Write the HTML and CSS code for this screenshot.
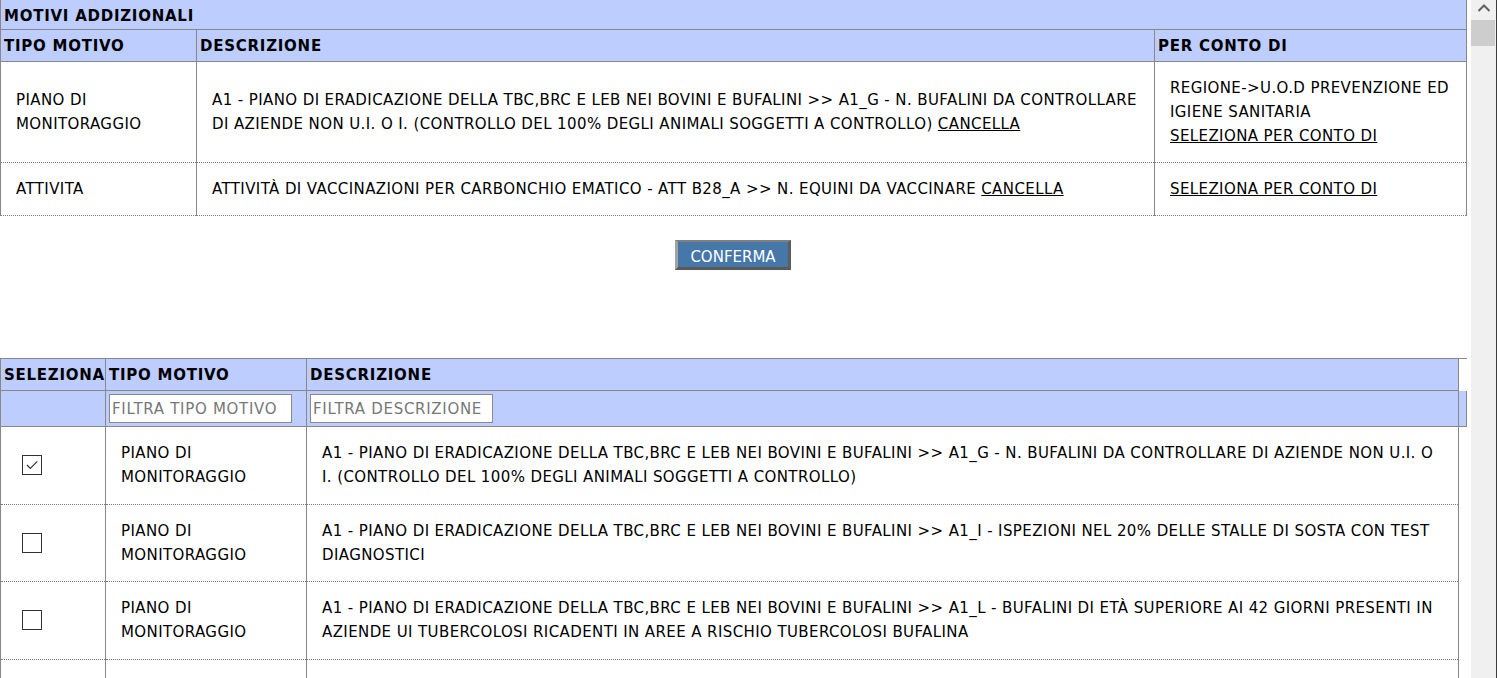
FILE: index.html
```html
<!DOCTYPE html>
<html lang="it">
<head>
<meta charset="utf-8">
<title>Motivi addizionali</title>
<link rel="stylesheet" href="styles.css">
</head>
<body>
<div class="page">
  <table class="grid t1">
    <colgroup><col class="c1a"><col class="c1b"><col class="c1c"></colgroup>
    <thead>
      <tr><th colspan="3" class="caption">MOTIVI ADDIZIONALI</th></tr>
      <tr><th>TIPO MOTIVO</th><th>DESCRIZIONE</th><th>PER CONTO DI</th></tr>
    </thead>
    <tbody>
      <tr>
        <td>PIANO DI MONITORAGGIO</td>
        <td>A1 - PIANO DI ERADICAZIONE DELLA TBC,BRC E LEB NEI BOVINI E BUFALINI &gt;&gt; A1_G - N. BUFALINI DA CONTROLLARE DI AZIENDE NON U.I. O I. (CONTROLLO DEL 100% DEGLI ANIMALI SOGGETTI A CONTROLLO) <a href="#">CANCELLA</a></td>
        <td>REGIONE-&gt;U.O.D PREVENZIONE ED IGIENE SANITARIA<br><a href="#">SELEZIONA PER CONTO DI</a></td>
      </tr>
      <tr>
        <td>ATTIVITA</td>
        <td>ATTIVITÀ DI VACCINAZIONI PER CARBONCHIO EMATICO - ATT B28_A &gt;&gt; N. EQUINI DA VACCINARE <a href="#">CANCELLA</a></td>
        <td><a href="#">SELEZIONA PER CONTO DI</a></td>
      </tr>
    </tbody>
  </table>

  <div class="actions"><button class="btn" type="button">CONFERMA</button></div>

  <table class="grid t2head">
    <colgroup><col class="c2a"><col class="c2b"><col class="c2c"><col class="c2d"></colgroup>
    <tr><th>SELEZIONA</th><th>TIPO MOTIVO</th><th>DESCRIZIONE</th><th class="gutter"></th></tr>
    <tr class="filters">
      <th></th>
      <th><input class="filter" type="text" placeholder="FILTRA TIPO MOTIVO"></th>
      <th><input class="filter" type="text" placeholder="FILTRA DESCRIZIONE"></th>
      <th class="gutter2"></th>
    </tr>
  </table>
  <table class="grid t2body">
    <colgroup><col class="c2a"><col class="c2b"><col class="c2c"></colgroup>
    <tr>
      <td class="sel"><span class="check on"><svg viewBox="0 0 18 18" width="18" height="18"><path d="M4 9 L7.3 12.3 L14.3 5.3" fill="none" stroke="#333" stroke-width="1.2"/></svg></span></td>
      <td>PIANO DI MONITORAGGIO</td>
      <td>A1 - PIANO DI ERADICAZIONE DELLA TBC,BRC E LEB NEI BOVINI E BUFALINI &gt;&gt; A1_G - N. BUFALINI DA CONTROLLARE DI AZIENDE NON U.I. O I. (CONTROLLO DEL 100% DEGLI ANIMALI SOGGETTI A CONTROLLO)</td>
    </tr>
    <tr>
      <td class="sel"><span class="check"></span></td>
      <td>PIANO DI MONITORAGGIO</td>
      <td>A1 - PIANO DI ERADICAZIONE DELLA TBC,BRC E LEB NEI BOVINI E BUFALINI &gt;&gt; A1_I - ISPEZIONI NEL 20% DELLE STALLE DI SOSTA CON TEST DIAGNOSTICI</td>
    </tr>
    <tr>
      <td class="sel"><span class="check"></span></td>
      <td>PIANO DI MONITORAGGIO</td>
      <td>A1 - PIANO DI ERADICAZIONE DELLA TBC,BRC E LEB NEI BOVINI E BUFALINI &gt;&gt; A1_L - BUFALINI DI ETÀ SUPERIORE AI 42 GIORNI PRESENTI IN AZIENDE UI TUBERCOLOSI RICADENTI IN AREE A RISCHIO TUBERCOLOSI BUFALINA</td>
    </tr>
    <tr>
      <td class="sel"><span class="check"></span></td>
      <td>PIANO DI MONITORAGGIO</td>
      <td>A1 - PIANO DI ERADICAZIONE DELLA TBC,BRC E LEB NEI BOVINI E BUFALINI &gt;&gt; A1_M - CONTROLLI SIEROLOGICI NEGLI ALLEVAMENTI BUFALINI</td>
    </tr>
  </table>
</div>

<div class="vscroll">
  <div class="arrow"><svg viewBox="0 0 14 10" width="14" height="10"><path d="M1.5 8 L7 2.5 L12.5 8" fill="none" stroke="#606060" stroke-width="2"/></svg></div>
  <div class="thumb"></div>
</div>
</body>
</html>
```

FILE: styles.css
```css
html {
  overflow: hidden;
}

body {
  margin: 0;
  background: #fff;
  color: #000;
  font-family: "DejaVu Sans", Verdana, sans-serif;
  font-size: 15px;
}

.page {
  width: 1466px;
}

.grid {
  border-collapse: collapse;
  table-layout: fixed;
}

.grid th,
.grid td {
  border-left: 1px solid #888;
  border-right: 1px solid #888;
  text-align: left;
  vertical-align: middle;
  line-height: 24px;
}

.grid th {
  background: #bccdfe;
  font-weight: bold;
  letter-spacing: 0.75px;
  padding: 4px 3px 3px;
  border-bottom: 1px solid #888;
}

.grid th.caption {
  padding: 4px 3px 1px;
}

.grid td {
  padding: 14px 15px;
  border-bottom: 1px dotted #777;
  letter-spacing: 0.4px;
}

.grid a {
  color: #000;
  text-decoration: underline;
}

.t1 { width: 1466px; }
.c1a { width: 196px; }
.c1b { width: 958px; }
.c1c { width: 312px; }

.actions {
  padding-top: 24px;
  text-align: center;
}

.btn {
  box-sizing: border-box;
  height: 30px;
  padding: 4px 12px 0;
  background: #4677a9;
  color: #fff;
  font-family: "DejaVu Sans", Verdana, sans-serif;
  font-size: 15px;
  line-height: 20px;
  border-style: solid;
  border-width: 2px 3px 3px 3px;
  border-color: #7f7f7f #5e5e5e #5a5a5a #a3a3a3;
  cursor: pointer;
}

.t2head {
  margin-top: 88px;
  width: 1466px;
  border-top: 1px solid #888;
}

.c2a { width: 105px; }
.c2b { width: 201px; }
.c2c { width: 1152px; }
.c2d { width: 8px; }

.t2head th.gutter {
  background: #fff;
  border-right: none;
  border-bottom: none;
  padding: 0;
}

.t2head th.gutter2 {
  border-top: none;
  border-right: 1px solid #888;
  padding: 0;
}

.t2head .filters th {
  padding: 3px 3px 3px;
  letter-spacing: 0;
}

.filter {
  box-sizing: border-box;
  display: block;
  width: 183px;
  height: 29px;
  margin: 0;
  padding: 1px 2px;
  border: 1px solid #8a8a8a;
  border-radius: 0;
  background: #fff;
  font-family: "DejaVu Sans", Verdana, sans-serif;
  font-size: 15px;
  letter-spacing: 0.7px;
  color: #000;
}

.filter::placeholder {
  color: #777;
}

.t2body {
  width: 1459px;
}

.t2body td {
  line-height: 24.25px;
}

.t2body td.sel {
  padding-left: 21px;
}

.check {
  box-sizing: border-box;
  display: block;
  width: 20px;
  height: 20px;
  border: 1px solid #333;
  background: #fff;
}

.check svg {
  display: block;
}

.vscroll {
  position: fixed;
  top: 0;
  right: 0;
  width: 25px;
  height: 100%;
  background: #f0f0f0;
  border-right: 1px solid #3c3c3c;
  display: flex;
  flex-direction: column;
}

.arrow {
  height: 20px;
  display: flex;
  justify-content: center;
  padding-top: 3px;
  box-sizing: border-box;
}

.arrow svg {
  display: block;
}

.thumb {
  width: 24px;
  height: 26px;
  background: #cdcdcd;
}
```
